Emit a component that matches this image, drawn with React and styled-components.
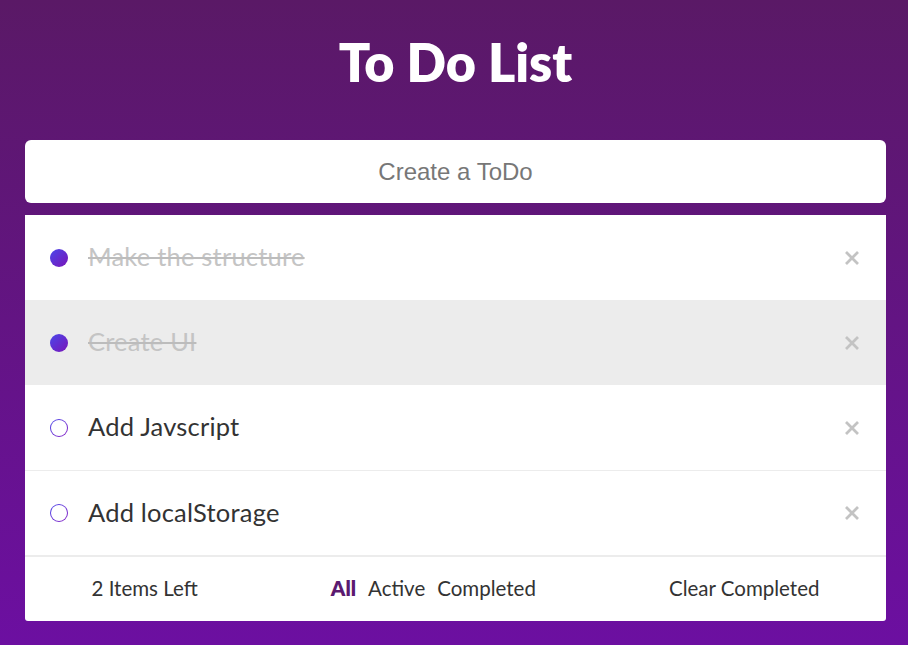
import React from "react";
import styled, { createGlobalStyle } from "styled-components";

const Global = createGlobalStyle`
  html, body { margin: 0; padding: 0; }
  body {
    min-height: 645px;
    background: linear-gradient(180deg, #5a1966 0%, #6c0fa1 100%);
    font-family: "Lato", "Noto Sans", sans-serif;
  }
`;

const Page = styled.div`
  padding: 0 22px 0 25px;
  display: flex;
  flex-direction: column;
`;

const Title = styled.h1`
  margin: 0;
  padding-top: 31px;
  height: 140px;
  box-sizing: border-box;
  text-align: center;
  color: #ffffff;
  font-family: "Lato", sans-serif;
  font-weight: 800;
  font-size: 52px;
  line-height: 62px;
`;

const Input = styled.input`
  box-sizing: border-box;
  height: 63px;
  width: 100%;
  border: none;
  outline: none;
  border-radius: 6px;
  background: #fff;
  text-align: center;
  font-family: "Liberation Sans", Arial, sans-serif;
  font-size: 24px;
  color: #333;
  &::placeholder { color: #777; }
`;

const Card = styled.div`
  margin-top: 12px;
  background: #fff;
  border-radius: 0 0 3px 3px;
  overflow: hidden;
`;

const Row = styled.div`
  height: 85px;
  display: flex;
  align-items: center;
  padding: 0 25px 0 25px;
  background: ${(p) => (p.$hover ? "#ececec" : "#fff")};
  border-top: ${(p) => (p.$divider ? "1px solid #ececec" : "none")};
  box-sizing: border-box;
`;

const Check = styled.span`
  width: 18px;
  height: 18px;
  border-radius: 50%;
  box-sizing: border-box;
  flex: none;
  ${(p) =>
    p.$done
      ? `background: linear-gradient(135deg, #4a48ea 0%, #7a14b8 100%);`
      : `border: 1.5px solid transparent;
         background: linear-gradient(#fff, #fff) padding-box,
           linear-gradient(135deg, #4a48ea 0%, #8a22c4 100%) border-box;`}
`;

const Text = styled.span`
  flex: 1;
  margin-left: 20px;
  padding-bottom: 3px;
  font-family: "Lato", sans-serif;
  font-size: 25.5px;
  letter-spacing: 0.2px;
  color: ${(p) => (p.$done ? "#c4c4c4" : "#333")};
  text-decoration: ${(p) => (p.$done ? "line-through" : "none")};
  text-decoration-thickness: 2px;
  text-decoration-color: #bcbcbc;
`;

const Remove = styled.button`
  border: none;
  background: none;
  padding: 0;
  width: 18px;
  height: 18px;
  display: flex;
  align-items: center;
  justify-content: center;
  cursor: pointer;
`;

const Footer = styled.div`
  height: 66px;
  border-top: 2px solid #ececec;
  box-sizing: border-box;
  display: flex;
  align-items: center;
  justify-content: space-around;
  padding-bottom: 2px;
  font-family: "Lato", sans-serif;
  font-size: 20.5px;
  color: #333;
`;

const Filters = styled.div`
  display: flex;
  gap: 12px;
`;

const Filter = styled.span`
  color: ${(p) => (p.$active ? "#5b1a70" : "#333")};
  font-weight: ${(p) => (p.$active ? 800 : 400)};
  cursor: pointer;
`;

const XIcon = () => (
  <svg width="16" height="16" viewBox="0 0 16 16">
    <path d="M2 2 L14 14 M14 2 L2 14" stroke="#c3c3c3" strokeWidth="2.8" strokeLinecap="butt" />
  </svg>
);

const todos = [
  { text: "Make the structure", done: true },
  { text: "Create UI", done: true, hover: true },
  { text: "Add Javscript", done: false },
  { text: "Add localStorage", done: false, divider: true },
];

export default function App() {
  return (
    <>
      <Global />
      <Page>
        <Title>To Do List</Title>
        <Input placeholder="Create a ToDo" />
        <Card>
          {todos.map((t) => (
            <Row key={t.text} $hover={t.hover} $divider={t.divider}>
              <Check $done={t.done} />
              <Text $done={t.done}>{t.text}</Text>
              <Remove aria-label="remove">
                <XIcon />
              </Remove>
            </Row>
          ))}
          <Footer>
            <span>2 Items Left</span>
            <Filters>
              <Filter $active>All</Filter>
              <Filter>Active</Filter>
              <Filter>Completed</Filter>
            </Filters>
            <span>Clear Completed</span>
          </Footer>
        </Card>
      </Page>
    </>
  );
}
